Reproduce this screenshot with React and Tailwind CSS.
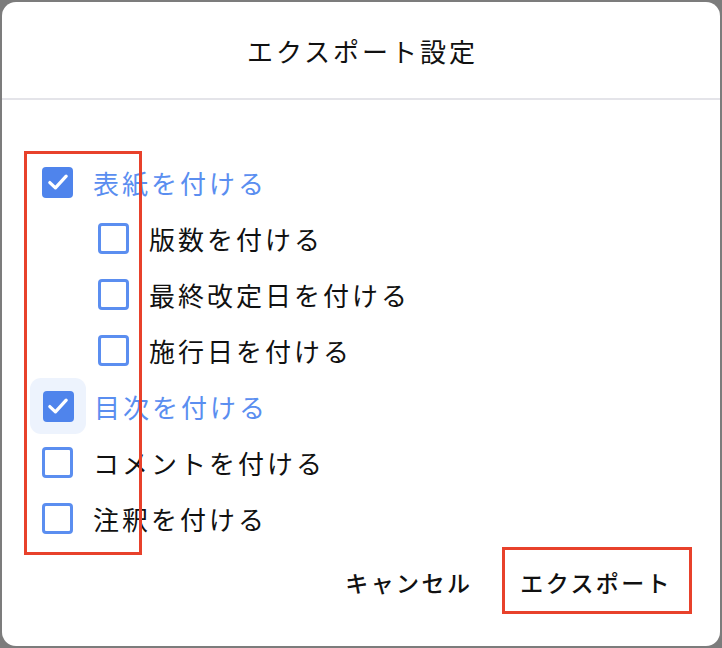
import React, { useState } from "react";

function Box({ checked }) {
  if (checked) {
    return (
      <span className="flex h-[31px] w-[31px] shrink-0 items-center justify-center rounded-[4px] bg-[#4f84ec]">
        <svg width="28" height="28" viewBox="0 0 24 24" fill="none">
          <polyline
            points="5,12.5 9.8,17 19,7"
            stroke="white"
            strokeWidth="2.8"
            strokeLinecap="round"
            strokeLinejoin="round"
          />
        </svg>
      </span>
    );
  }
  return (
    <span className="block h-[31px] w-[31px] shrink-0 rounded-[4px] border-[3px] border-[#5b8ef0] bg-white" />
  );
}

function Row({ label, checked, indent, hover, onToggle }) {
  return (
    <div
      className={
        "flex h-[56px] items-center gap-[20px] " + (indent ? "pl-[96px]" : "pl-[40px]")
      }
      onClick={onToggle}
    >
      {hover ? (
        <span className="-mx-[12px] flex h-[56px] w-[56px] items-center justify-center rounded-[11px] bg-[#edf3fd]">
          <Box checked={checked} />
        </span>
      ) : (
        <Box checked={checked} />
      )}
      <span
        className={
          "text-[26px] tracking-[3px] " + (checked ? "text-[#5a8ef0]" : "text-[#111]")
        }
      >
        {label}
      </span>
    </div>
  );
}

export default function App() {
  const [items, setItems] = useState([
    { key: "cover", label: "表紙を付ける", checked: true },
    { key: "edition", label: "版数を付ける", checked: false, indent: true },
    { key: "revised", label: "最終改定日を付ける", checked: false, indent: true },
    { key: "enforce", label: "施行日を付ける", checked: false, indent: true },
    { key: "toc", label: "目次を付ける", checked: true, hover: true },
    { key: "comment", label: "コメントを付ける", checked: false },
    { key: "notes", label: "注釈を付ける", checked: false },
  ]);

  const toggle = (key) =>
    setItems((prev) =>
      prev.map((it) => (it.key === key ? { ...it, checked: !it.checked } : it))
    );

  return (
    <div className="h-[648px] w-[722px] overflow-hidden bg-[#7c7c7c] pl-[2px] pt-[2px] font-['Noto_Sans_CJK_JP',sans-serif]">
      <div className="relative h-[644px] w-[718px] rounded-[14px] bg-white">
        <div className="flex h-[98px] items-center justify-center border-b-2 border-[#e4e4e9]">
          <h1 className="pl-[3px] text-[26px] tracking-[3px] text-[#111]">エクスポート設定</h1>
        </div>

        <div className="pt-[54px]">
          {items.map((it) => (
            <Row
              key={it.key}
              label={it.label}
              checked={it.checked}
              indent={it.indent}
              hover={it.hover}
              onToggle={() => toggle(it.key)}
            />
          ))}
        </div>

        <div className="flex items-center justify-end gap-[16px] pr-[32px] pt-[8px]">
          <button className="h-[56px] px-[16px] text-[23px] font-medium tracking-[2.4px] text-[#111]">
            キャンセル
          </button>
          <button className="h-[56px] px-[16px] text-[23px] font-medium tracking-[2.4px] text-[#111]">
            エクスポート
          </button>
        </div>

        {/* annotation frames */}
        <div className="pointer-events-none absolute left-[22px] top-[149px] h-[404px] w-[118px] border-[3px] border-[#e8412b]" />
        <div className="pointer-events-none absolute left-[500px] top-[545px] h-[67px] w-[190px] border-[3px] border-[#e8412b]" />
      </div>
    </div>
  );
}
